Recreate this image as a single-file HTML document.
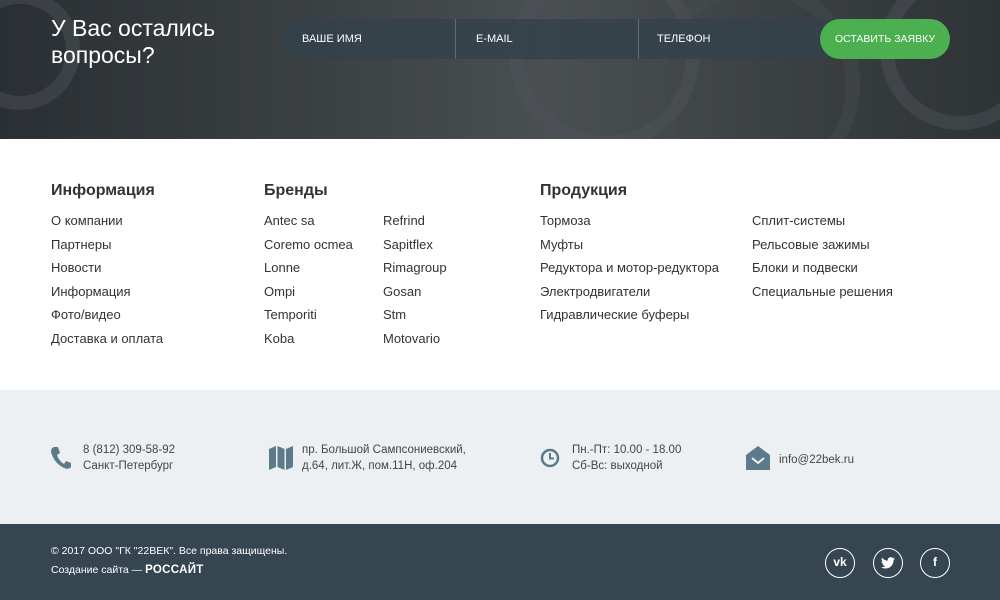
<!DOCTYPE html>
<html><head><meta charset="utf-8"><style>
*{margin:0;padding:0;box-sizing:border-box}
body{width:1000px;height:600px;overflow:hidden;font-family:"Liberation Sans","DejaVu Sans",sans-serif;background:#fff;position:relative}
.hero{position:absolute;left:0;top:0;width:1000px;height:139px;background:linear-gradient(90deg,#2a2f33 0%,#3a3f42 30%,#4a4f52 55%,#3d4245 75%,#2e3336 100%);overflow:hidden}
.hero .c{position:absolute;border-radius:50%;border:14px solid rgba(80,85,88,.45)}
.hero h2{position:absolute;left:51px;top:15px;color:#fff;font-weight:normal;font-size:23px;line-height:27px}
.form{position:absolute;left:283px;top:19px;width:667px;height:40px;border-radius:20px;background:rgba(52,66,74,.85)}
.form span{position:absolute;top:14px;color:#fff;font-size:11px}
.sep{position:absolute;top:0;width:1px;height:40px;background:rgba(120,135,140,.6)}
.btn{position:absolute;left:820px;top:19px;width:130px;height:40px;border-radius:20px;background:#4caf50;color:#fff;font-size:10.5px;text-align:center;line-height:40px}
h3{position:absolute;font-size:16px;color:#333;font-weight:bold}
.col{position:absolute;top:209px;font-size:13px;color:#333;line-height:23.6px}
.contacts{position:absolute;left:0;top:390px;width:1000px;height:134px;background:#edf0f3}
.ct{position:absolute;font-size:11.5px;color:#444;line-height:16px}
.foot{position:absolute;left:0;top:524px;width:1000px;height:76px;background:#354650;color:#fff;font-size:10.5px}
.soc{position:absolute;top:548px;width:30px;height:30px;border:1.5px solid #fff;border-radius:50%;color:#fff;font-size:12px;font-weight:bold;text-align:center;line-height:27px}
</style></head><body>
<div class="hero">
 <div class="c" style="left:-40px;top:-10px;width:120px;height:120px"></div>
 <div class="c" style="left:510px;top:-40px;width:190px;height:190px"></div>
 <div class="c" style="left:650px;top:-20px;width:210px;height:210px;border-color:rgba(70,75,78,.45)"></div>
 <div class="c" style="left:880px;top:-30px;width:160px;height:160px"></div>
 <h2>У Вас остались<br>вопросы?</h2>
 <div class="form"><span style="left:19px">ВАШЕ ИМЯ</span><div class="sep" style="left:172px"></div><span style="left:193px">E-MAIL</span><div class="sep" style="left:355px"></div><span style="left:374px">ТЕЛЕФОН</span></div>
 <div class="btn">ОСТАВИТЬ ЗАЯВКУ</div>
</div>
<h3 style="left:51px;top:182px">Информация</h3>
<h3 style="left:264px;top:182px">Бренды</h3>
<h3 style="left:540px;top:182px">Продукция</h3>
<div class="col" style="left:51px">О компании<br>Партнеры<br>Новости<br>Информация<br>Фото/видео<br>Доставка и оплата</div>
<div class="col" style="left:264px">Antec sa<br>Coremo ocmea<br>Lonne<br>Ompi<br>Temporiti<br>Koba</div>
<div class="col" style="left:383px">Refrind<br>Sapitflex<br>Rimagroup<br>Gosan<br>Stm<br>Motovario</div>
<div class="col" style="left:540px">Тормоза<br>Муфты<br>Редуктора и мотор-редуктора<br>Электродвигатели<br>Гидравлические буферы</div>
<div class="col" style="left:752px">Сплит-системы<br>Рельсовые зажимы<br>Блоки и подвески<br>Специальные решения</div>
<div class="contacts">
 <svg style="position:absolute;left:50px;top:56px" width="22" height="24" viewBox="0 0 22 24"><path d="M4 1 L8 1 L10 7 L7 9 Q9 15 14 18 L16 15 L21 17 L21 21 Q19 24 14 22 Q4 17 1 6 Q1 2 4 1Z" fill="#5d7a8a"/></svg>
 <div class="ct" style="left:83px;top:52px">8 (812) 309-58-92<br>Санкт-Петербург</div>
 <svg style="position:absolute;left:269px;top:56px" width="24" height="24" viewBox="0 0 24 24"><path d="M0 3 L7 0 L7 21 L0 24Z M8.5 0 L15.5 3 L15.5 24 L8.5 21Z M17 3 L24 0 L24 21 L17 24Z" fill="#5d7a8a"/></svg>
 <div class="ct" style="left:302px;top:52px">пр. Большой Сампсониевский,<br>д.64, лит.Ж, пом.11Н, оф.204</div>
 <svg style="position:absolute;left:540px;top:58px" width="20" height="20" viewBox="0 0 20 20"><circle cx="10" cy="10" r="8" fill="none" stroke="#5d7a8a" stroke-width="2.5"/><path d="M10 5 V10.5 H14" fill="none" stroke="#5d7a8a" stroke-width="2"/></svg>
 <div class="ct" style="left:572px;top:52px">Пн.-Пт: 10.00 - 18.00<br>Сб-Вс: выходной</div>
 <svg style="position:absolute;left:746px;top:56px" width="24" height="24" viewBox="0 0 24 24"><path d="M0 9 L12 0 L24 9 L24 24 L0 24Z" fill="#5d7a8a"/><path d="M6 12 L12 17 L18 12" fill="none" stroke="#edf0f3" stroke-width="2"/></svg>
 <div class="ct" style="left:779px;top:62px">info@22bek.ru</div>
</div>
<div class="foot">
 <div style="position:absolute;left:51px;top:21px">© 2017 ООО "ГК "22ВЕК". Все права защищены.</div>
 <div style="position:absolute;left:51px;top:40px">Создание сайта — <b style="font-size:11.5px;letter-spacing:.3px">РОССАЙТ</b></div>
</div>
<div class="soc" style="left:825px">vk</div>
<div class="soc" style="left:873px"><svg width="14" height="12" viewBox="0 0 24 20" style="margin-top:8px"><path d="M24 2.4a10 10 0 0 1-2.8.8A5 5 0 0 0 23.300.4a10 10 0 0 1-3.1 1.2A4.9 4.9 0 0 0 11.8 6 14 14 0 0 1 1.700.9a4.9 4.9 0 0 0 1.5 6.6A4.9 4.9 0 0 1 1 6.9a4.9 4.9 0 0 0 3.9 4.8 5 5 0 0 1-2.200.1 4.9 4.9 0 0 0 4.6 3.4A9.9 9.9 0 0 1 0 17.3 14 14 0 0 0 7.5 19.5c9 0 14-7.5 14-14v-.6A10 10 0 0 0 24 2.4z" fill="#fff"/></svg></div>
<div class="soc" style="left:920px">f</div>
</body></html>
